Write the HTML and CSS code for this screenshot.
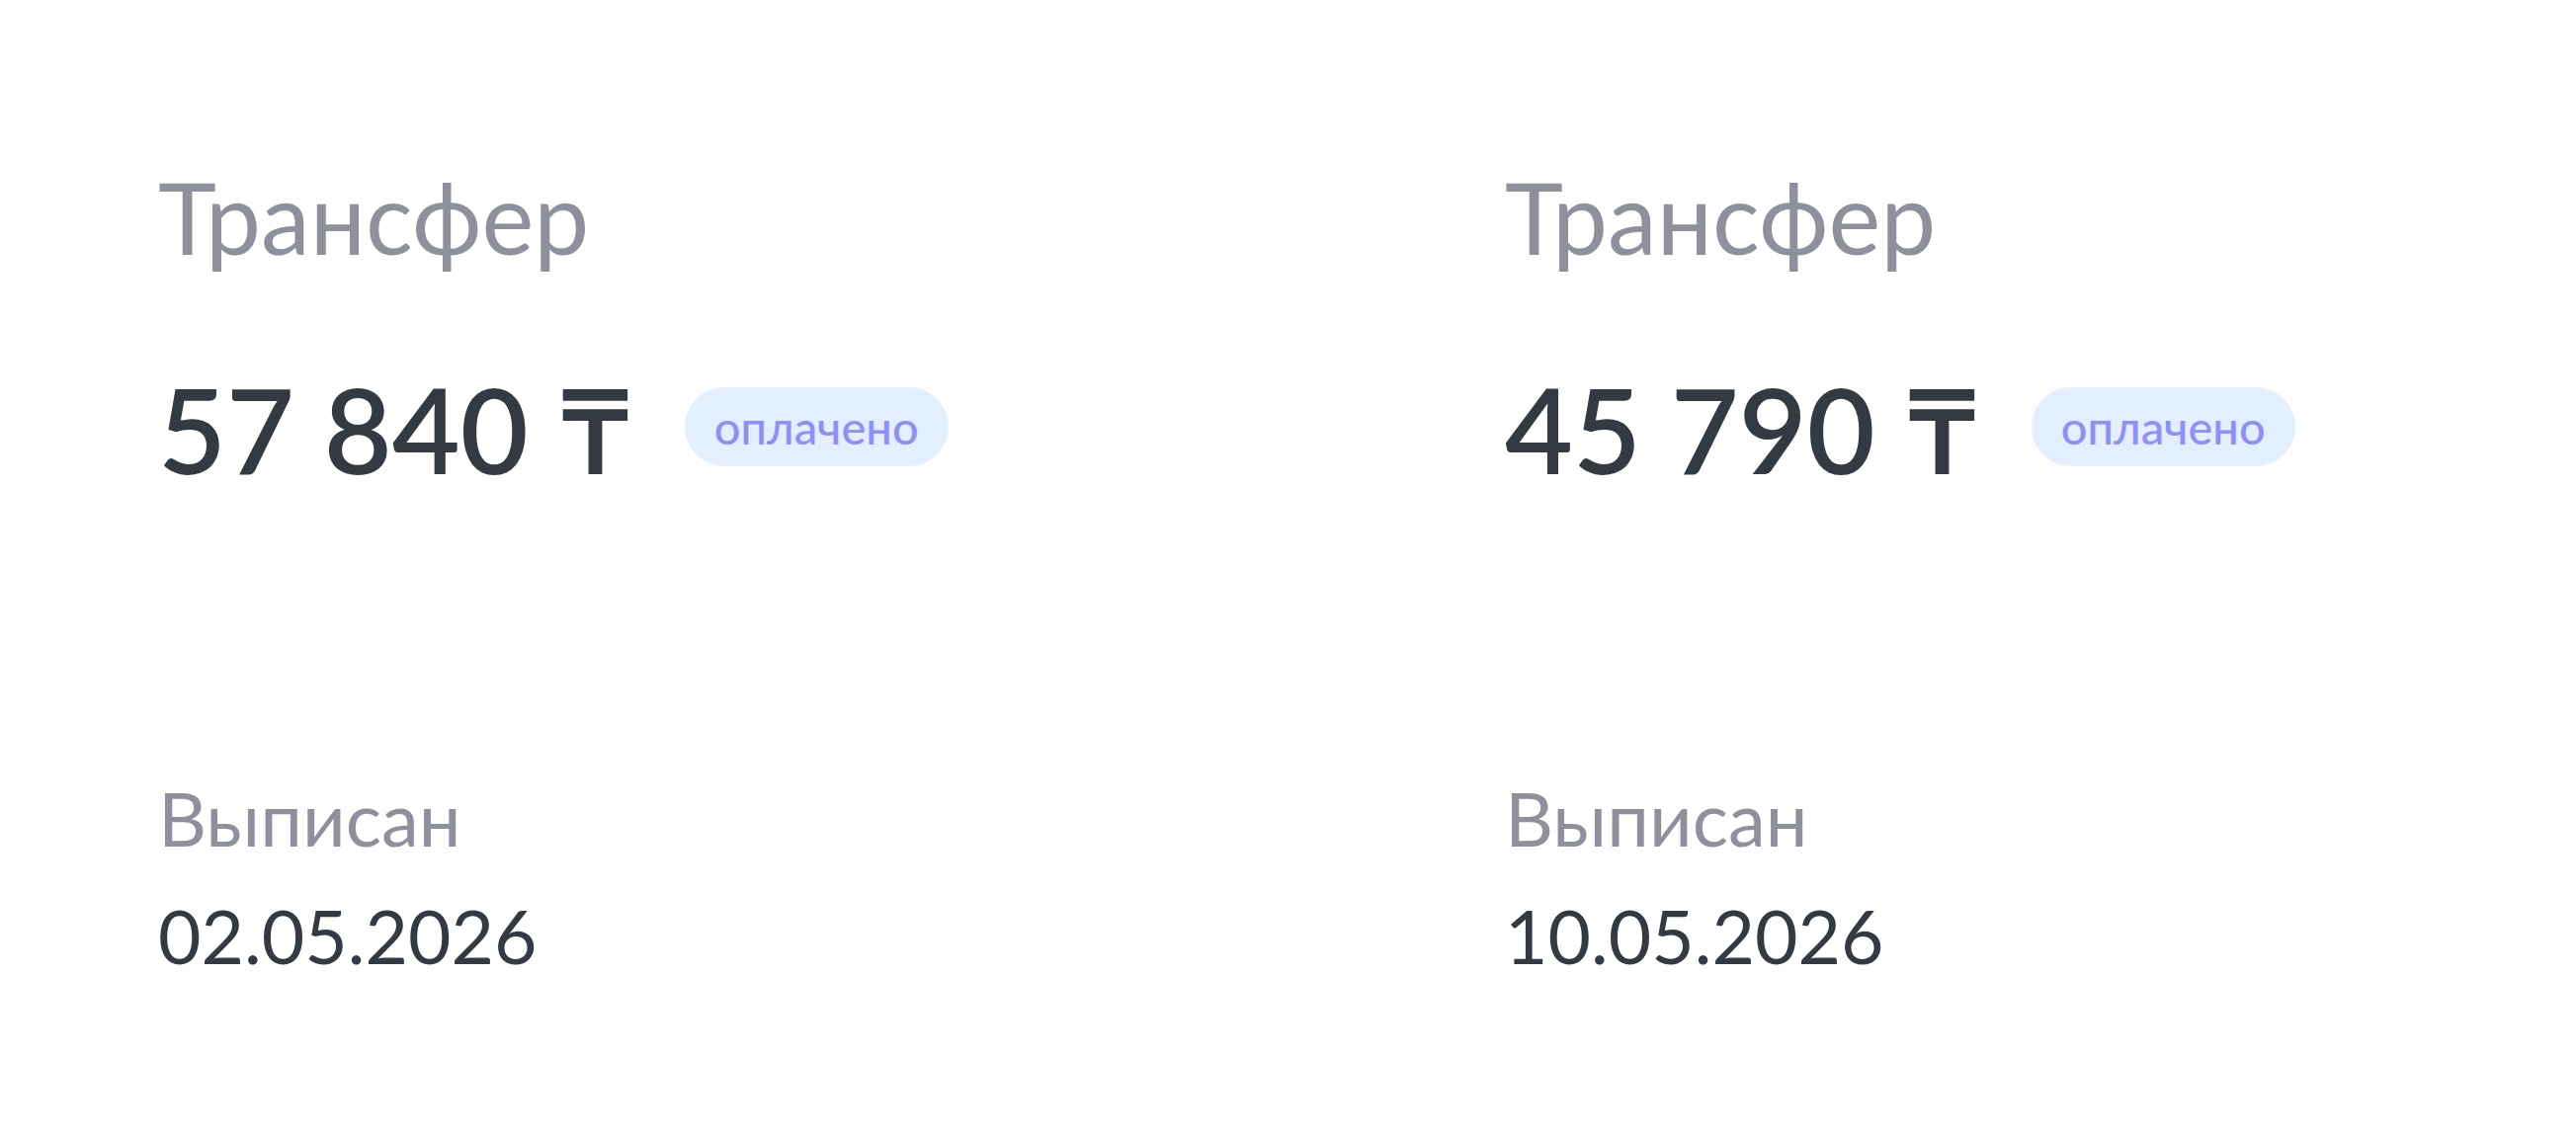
FILE: index.html
```html
<!DOCTYPE html>
<html lang="ru">
<head>
<meta charset="utf-8">
<title>Счета</title>
<link rel="stylesheet" href="styles.css">
</head>
<body>
<main class="invoices">
  <section class="invoice">
    <h2 class="invoice-title">Трансфер</h2>
    <div class="invoice-amount-row">
      <span class="invoice-amount">57 840 ₸</span>
      <span class="badge">оплачено</span>
    </div>
    <div class="invoice-meta">
      <div class="meta-label">Выписан</div>
      <div class="meta-value">02.05.2026</div>
    </div>
  </section>
  <section class="invoice">
    <h2 class="invoice-title">Трансфер</h2>
    <div class="invoice-amount-row">
      <span class="invoice-amount">45 790 ₸</span>
      <span class="badge">оплачено</span>
    </div>
    <div class="invoice-meta">
      <div class="meta-label">Выписан</div>
      <div class="meta-value">10.05.2026</div>
    </div>
  </section>
</main>
</body>
</html>
```

FILE: styles.css
```css
html, body {
  margin: 0;
  padding: 0;
  background: #ffffff;
}

body {
  font-family: Lato, "Noto Sans", "Liberation Sans", sans-serif;
  color: #343a41;
}

.invoices {
  display: grid;
  grid-template-columns: 1363px 1fr;
  padding: 159px 0 0 160px;
}

.invoice {
  display: flex;
  flex-direction: column;
}

.invoice-title {
  margin: 0;
  font-size: 100px;
  font-weight: 400;
  line-height: 120px;
  color: #8e909c;
}

.invoice-amount-row {
  display: flex;
  align-items: center;
  gap: 52px;
  margin-top: 83px;
}

.invoice-amount {
  font-size: 119px;
  font-weight: 600;
  line-height: 144px;
  color: #343a41;
}

.badge {
  display: inline-flex;
  align-items: center;
  height: 80px;
  margin-bottom: 4px;
  padding: 0 30px;
  border-radius: 40px;
  background: #e3eeff;
  color: #8f8ffa;
  font-size: 47px;
  font-weight: 500;
}

.invoice-meta {
  margin-top: 276px;
}

.meta-label {
  font-size: 76px;
  line-height: 91px;
  color: #8e909c;
}

.meta-value {
  margin-top: 29px;
  font-size: 75px;
  line-height: 91px;
  color: #343a41;
}
```
